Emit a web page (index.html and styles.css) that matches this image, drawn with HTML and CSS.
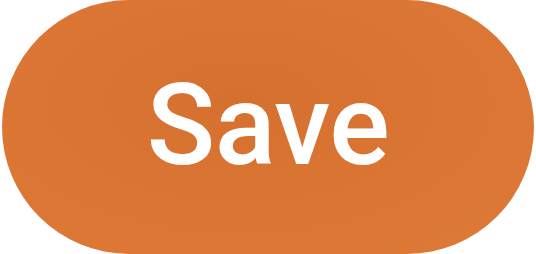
FILE: index.html
```html
<!DOCTYPE html>
<html lang="en">
<head>
<meta charset="utf-8">
<title>Save</title>
<link rel="stylesheet" href="styles.css">
</head>
<body>
<div class="page">
  <button class="save-btn" type="button">Save</button>
</div>
</body>
</html>
```
FILE: styles.css
```css
html, body {
  margin: 0;
  padding: 0;
  background: #ffffff;
}
.page {
  width: 536px;
  height: 254px;
  display: flex;
  align-items: center;
  justify-content: center;
}
.save-btn {
  width: 532px;
  height: 254px;
  border: none;
  border-radius: 127px;
  background: radial-gradient(ellipse at 45% 40%, #d6702f 0%, #db7634 60%, #de7a37 100%);
  color: #ffffff;
  font-family: Roboto, "Liberation Sans", sans-serif;
  font-weight: 500;
  font-size: 113px;
  letter-spacing: -0.5px;
  padding: 0 0 4px 0;
  display: flex;
  align-items: center;
  justify-content: center;
  cursor: pointer;
}
```
